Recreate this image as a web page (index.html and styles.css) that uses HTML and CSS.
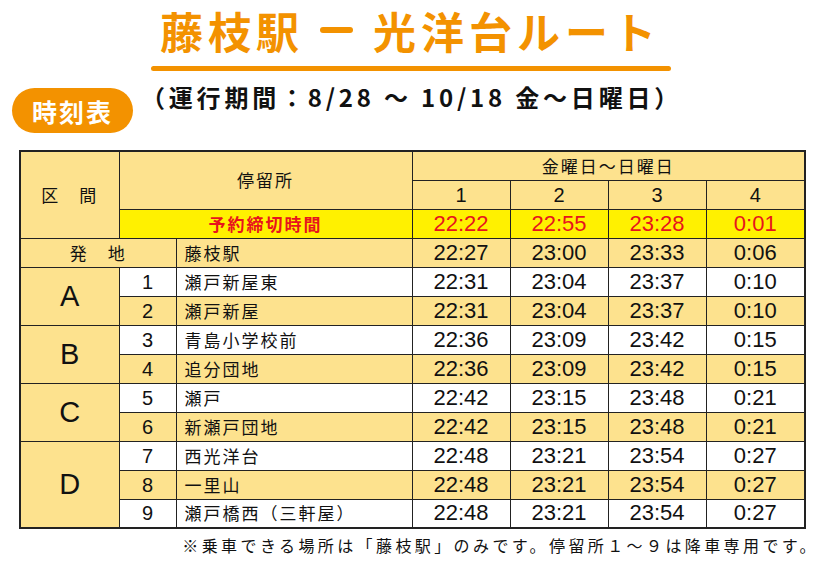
FILE: index.html
```html
<!DOCTYPE html>
<html lang="ja">
<head>
<meta charset="utf-8">
<title>藤枝駅 − 光洋台ルート 時刻表</title>
<link rel="stylesheet" href="styles.css">
</head>
<body>
<div class="page">
  <header class="head">
    <h1 class="title"><span>藤枝駅</span><span class="dash"></span><span>光洋台ルート</span></h1>
  </header>
  <div class="subrow">
    <span class="badge">時刻表</span>
    <p class="period">（運行期間：8/28 〜 10/18 金〜日曜日）</p>
  </div>
  <table class="tt">
    <colgroup>
      <col class="c-sec"><col class="c-no"><col class="c-name">
      <col class="c-t"><col class="c-t"><col class="c-t"><col class="c-t4">
    </colgroup>
    <tr class="hd">
      <td rowspan="3" class="jp">区　間</td>
      <td rowspan="2" colspan="2" class="jp">停留所</td>
      <td colspan="4" class="jp">金曜日〜日曜日</td>
    </tr>
    <tr class="hd">
      <td class="num">1</td><td class="num">2</td><td class="num">3</td><td class="num">4</td>
    </tr>
    <tr class="dl">
      <td colspan="2" class="jp red bold">予約締切時間</td>
      <td class="tm red">22:22</td><td class="tm red">22:55</td><td class="tm red">23:28</td><td class="tm red">0:01</td>
    </tr>
    <tr class="hd">
      <td colspan="2" class="jp">発　地</td>
      <td class="jp name">藤枝駅</td>
      <td class="tm">22:27</td><td class="tm">23:00</td><td class="tm">23:33</td><td class="tm">0:06</td>
    </tr>
    <tr class="w">
      <td rowspan="2" class="sec">A</td>
      <td class="num">1</td><td class="jp name">瀬戸新屋東</td>
      <td class="tm">22:31</td><td class="tm">23:04</td><td class="tm">23:37</td><td class="tm">0:10</td>
    </tr>
    <tr class="y">
      <td class="num">2</td><td class="jp name">瀬戸新屋</td>
      <td class="tm">22:31</td><td class="tm">23:04</td><td class="tm">23:37</td><td class="tm">0:10</td>
    </tr>
    <tr class="w">
      <td rowspan="2" class="sec">B</td>
      <td class="num">3</td><td class="jp name">青島小学校前</td>
      <td class="tm">22:36</td><td class="tm">23:09</td><td class="tm">23:42</td><td class="tm">0:15</td>
    </tr>
    <tr class="y">
      <td class="num">4</td><td class="jp name">追分団地</td>
      <td class="tm">22:36</td><td class="tm">23:09</td><td class="tm">23:42</td><td class="tm">0:15</td>
    </tr>
    <tr class="w">
      <td rowspan="2" class="sec">C</td>
      <td class="num">5</td><td class="jp name">瀬戸</td>
      <td class="tm">22:42</td><td class="tm">23:15</td><td class="tm">23:48</td><td class="tm">0:21</td>
    </tr>
    <tr class="y">
      <td class="num">6</td><td class="jp name">新瀬戸団地</td>
      <td class="tm">22:42</td><td class="tm">23:15</td><td class="tm">23:48</td><td class="tm">0:21</td>
    </tr>
    <tr class="w">
      <td rowspan="3" class="sec">D</td>
      <td class="num">7</td><td class="jp name">西光洋台</td>
      <td class="tm">22:48</td><td class="tm">23:21</td><td class="tm">23:54</td><td class="tm">0:27</td>
    </tr>
    <tr class="y">
      <td class="num">8</td><td class="jp name">一里山</td>
      <td class="tm">22:48</td><td class="tm">23:21</td><td class="tm">23:54</td><td class="tm">0:27</td>
    </tr>
    <tr class="w">
      <td class="num">9</td><td class="jp name">瀬戸橋西（三軒屋）</td>
      <td class="tm">22:48</td><td class="tm">23:21</td><td class="tm">23:54</td><td class="tm">0:27</td>
    </tr>
  </table>
  <p class="note">※乗車できる場所は「藤枝駅」のみです。停留所１〜９は降車専用です。</p>
</div>
</body>
</html>
```

FILE: styles.css
```css
* { box-sizing: border-box; }
html, body { margin: 0; padding: 0; background: #fff; }
body {
  font-family: "Noto Sans CJK JP", "Noto Sans", sans-serif;
  color: #111;
  width: 821px;
  height: 565px;
  overflow: hidden;
}
.page {
  display: flex;
  flex-direction: column;
}
.head {
  width: 520px;
  margin: 0 auto;
  display: flex;
  flex-direction: column;
  align-items: center;
}
.head::after {
  content: "";
  display: block;
  width: 520px;
  height: 5px;
  border-radius: 3px;
  background: #f39200;
  margin-top: 6px;
}
.title {
  margin: 0;
  font-size: 43px;
  line-height: 60px;
  font-weight: 700;
  color: #f39200;
  letter-spacing: 5px;
  white-space: nowrap;
  display: flex;
  align-items: center;
  justify-content: center;
}
.dash {
  display: inline-block;
  width: 33px;
  height: 6px;
  border-radius: 3px;
  background: #f39200;
  margin: 0 20px 0 16px;
}
.subrow {
  display: flex;
  align-items: flex-start;
  margin-top: 17px;
  padding-left: 12px;
}
.badge {
  width: 121px;
  height: 45px;
  border-radius: 23px;
  background: #f39200;
  color: #fff;
  font-weight: 700;
  font-size: 25px;
  letter-spacing: 2px;
  display: flex;
  align-items: center;
  justify-content: center;
}
.period {
  margin: -6px 0 0 8px;
  font-size: 24px;
  line-height: 30px;
  font-weight: 700;
  color: #111;
  letter-spacing: 3.8px;
  white-space: nowrap;
}
.tt {
  margin: 17px 0 0 19px;
  width: 785px;
  border-collapse: collapse;
  table-layout: fixed;
  border: 2px solid #222;
}
.c-sec { width: 99px; }
.c-no { width: 57px; }
.c-name { width: 236px; }
.c-t { width: 98px; }
.c-t4 { width: 99px; }
.tt td {
  border: 1px solid #222;
  height: 29px;
  padding: 0;
  text-align: center;
  vertical-align: middle;
  line-height: 26px;
  white-space: nowrap;
}
.hd td, .y td, .sec { background: #fde28e; }
.w td { background: #fff; }
.w td.sec, .y td.sec { background: #fde28e; }
.dl td { background: #fff100; }
.jp {
  font-family: "Noto Sans CJK JP", sans-serif;
  font-size: 17px;
  letter-spacing: 2px;
}
.name { text-align: left !important; padding-left: 8px !important; }
.num {
  font-family: "Liberation Sans", Arial, sans-serif;
  font-size: 20px;
}
.tm {
  font-family: "Liberation Sans", Arial, sans-serif;
  font-size: 22px;
}
.sec {
  font-family: "Liberation Sans", Arial, sans-serif;
  font-size: 29px;
}
.red { color: #e8141d; }
.bold { font-weight: 700; }
.note {
  margin: 5px 2px 0 0;
  text-align: right;
  font-size: 16px;
  line-height: 22px;
  letter-spacing: 3.4px;
  color: #111;
  white-space: nowrap;
}
```
